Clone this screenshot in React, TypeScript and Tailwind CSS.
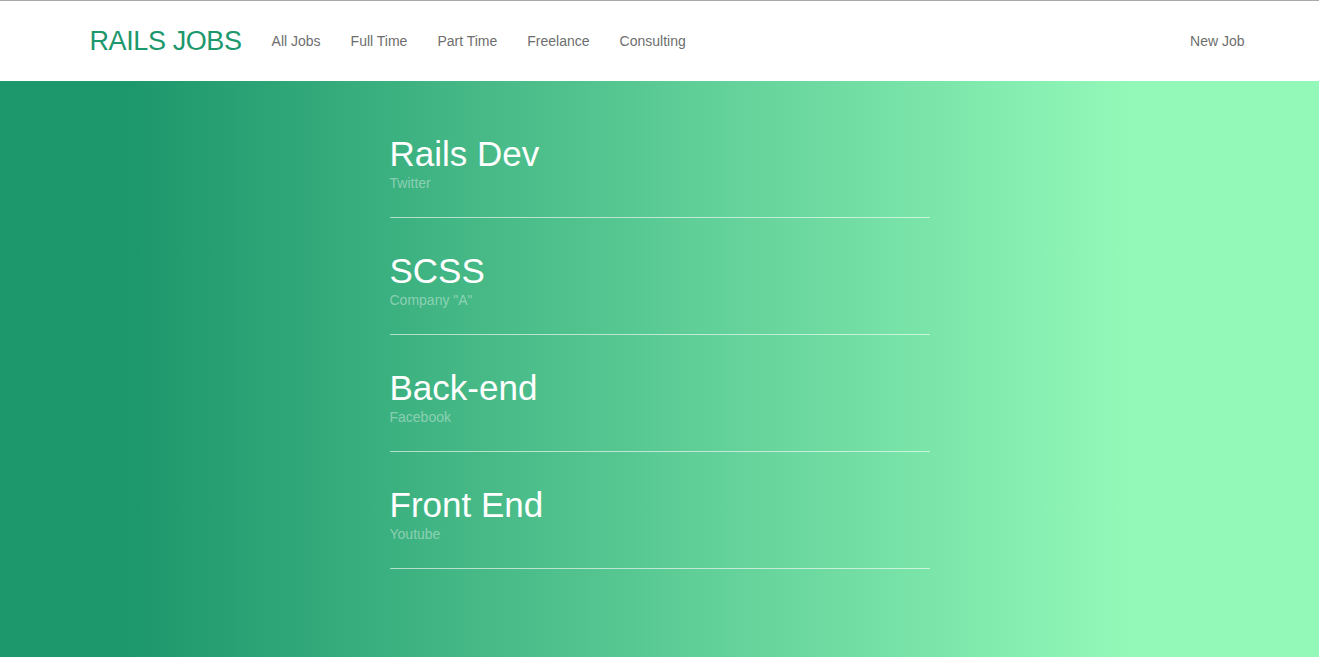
const navLinks = ['All Jobs', 'Full Time', 'Part Time', 'Freelance', 'Consulting'];

const jobs = [
  { id: 1, title: 'Rails Dev', company: 'Twitter' },
  { id: 2, title: 'SCSS', company: 'Company "A"' },
  { id: 3, title: 'Back-end', company: 'Facebook' },
  { id: 4, title: 'Front End', company: 'Youtube' },
];

export default function App() {
  return (
    <div className="min-h-screen flex flex-col font-['Liberation_Sans',Arial,sans-serif]">
      <header className="bg-white border-t border-[#a9a9a9] h-[81px] shrink-0">
        <div className="w-[1170px] mx-auto px-[15px] h-full flex items-center pt-[1px]">
          <a href="#" className="text-[27px] text-[#1d976c] leading-none mr-[15px] tracking-[-0.4px]">
            RAILS JOBS
          </a>
          <nav className="flex items-center">
            {navLinks.map((link) => (
              <a key={link} href="#" className="px-[15px] text-[14px] text-[#6e6e6e]">
                {link}
              </a>
            ))}
          </nav>
          <a href="#" className="ml-auto mr-[-15px] text-[14px] text-[#6e6e6e]">
            New Job
          </a>
        </div>
      </header>

      <main className="flex-1 bg-[linear-gradient(to_right,#1d976c_10%,#93f9b9_86%)] pt-[53px] pb-10">
        <div className="w-[540px] mx-auto">
          {jobs.map((job) => (
            <div key={job.id} className="border-b border-white/60 pb-[24px] mb-[33px]">
              <h2 className="text-[35px] leading-[39px] text-white">{job.title}</h2>
              <p className="text-[14px] leading-[20px] text-white/40">{job.company}</p>
            </div>
          ))}
        </div>
      </main>
    </div>
  );
}
